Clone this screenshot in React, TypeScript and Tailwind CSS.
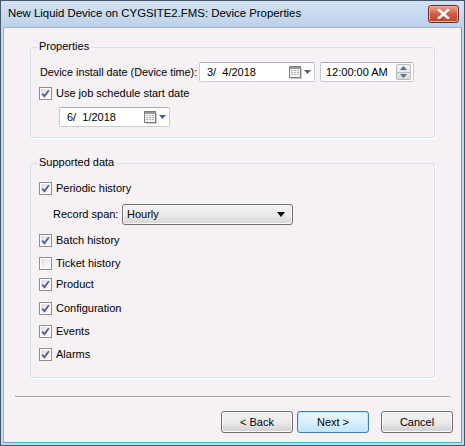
import React from "react";

const font = { fontFamily: '"Liberation Sans", Arial, sans-serif' };

function Check({ checked }: { checked: boolean }) {
  return (
    <span className="relative inline-block w-[13px] h-[13px] border border-[#8f8f8f] bg-white shrink-0">
      <span className="absolute inset-[1px] bg-gradient-to-br from-[#dcdcdc] via-[#f0f0f0] to-[#fafafa]" />
      {checked && (
        <svg className="absolute left-[1px] top-[1px]" width="9" height="9" viewBox="0 0 9 9">
          <path d="M1.2 4.6 L3.4 7.2 L7.8 1.2" fill="none" stroke="#4a5f97" strokeWidth="1.8" />
        </svg>
      )}
    </span>
  );
}

function CheckRow({ checked, label, className = "" }: { checked: boolean; label: string; className?: string }) {
  return (
    <div className={"flex items-center gap-[4px] h-[13px] " + className}>
      <Check checked={checked} />
      <span className="text-[11px] text-black leading-none">{label}</span>
    </div>
  );
}

function CalIcon() {
  return (
    <span className="flex items-center gap-[2px]">
      <svg width="13" height="13" viewBox="0 0 13 13">
        <rect x="0.5" y="0.5" width="11" height="11" fill="#f4f4f4" stroke="#7d7d7d" />
        <rect x="1" y="1" width="10" height="2" fill="#9a9a9a" />
        <g fill="#b8b8b8">
          <rect x="2" y="4" width="2" height="1" />
          <rect x="5" y="4" width="2" height="1" />
          <rect x="8" y="4" width="2" height="1" />
          <rect x="2" y="6" width="2" height="1" />
          <rect x="5" y="6" width="2" height="1" />
          <rect x="8" y="6" width="2" height="1" />
          <rect x="2" y="8" width="2" height="1" />
          <rect x="5" y="8" width="2" height="1" />
          <rect x="8" y="8" width="2" height="1" />
        </g>
        <rect x="12" y="2" width="1" height="11" fill="#c8c8c8" />
        <rect x="2" y="12" width="11" height="1" fill="#c8c8c8" />
      </svg>
      <svg width="7" height="4" viewBox="0 0 7 4">
        <path d="M0 0 H7 L3.5 4 Z" fill="#4d5b73" />
      </svg>
    </span>
  );
}

function DateBox({ value, w }: { value: string; w: string }) {
  return (
    <div className={"flex items-center h-[20px] bg-white border border-[#c9ccd1] border-t-[#abadb3] rounded-[2px] pl-[7px] pr-[3px] " + w}>
      <span className="flex-1 text-[11px] text-black leading-none whitespace-pre">{value}</span>
      <CalIcon />
    </div>
  );
}

function Button({ label, def = false }: { label: string; def?: boolean }) {
  return (
    <div
      className={
        "w-[72px] h-[22px] rounded-[3px] border flex items-center justify-center text-[11px] text-black " +
        (def
          ? "border-[#3c7fb1] bg-gradient-to-b from-[#eaf6fd] via-[#d9f0fc] to-[#bee6fd] shadow-[inset_0_0_0_1px_#c2e4f6]"
          : "border-[#707070] bg-gradient-to-b from-[#f2f2f2] via-[#ebebeb] to-[#cfcfcf] shadow-[inset_0_0_0_1px_#fcfcfc]")
      }
    >
      {label}
    </div>
  );
}

function Group({ title, className, children }: { title: string; className: string; children: React.ReactNode }) {
  return (
    <div className={"relative border border-[#d5dfe5] rounded-[3px] shadow-[1px_1px_0_#ffffff] " + className}>
      <span className="absolute left-[6px] -top-[7px] px-[2px] bg-[#f5f1f5] text-[11px] text-black leading-none">{title}</span>
      {children}
    </div>
  );
}

export default function App() {
  return (
    <div style={font} className="w-[465px] h-[446px] bg-white">
      <div className="w-[465px] h-[446px] border border-[#44576f] bg-[#c4d8ee] flex flex-col">
        <div className="h-[26px] flex items-center pl-[7px] pr-[5px] bg-gradient-to-b from-[#d3e2f3] to-[#bcd2eb]">
          <span className="flex-1 text-[11.4px] text-black">
            New Liquid Device on CYGSITE2.FMS: Device Properties
          </span>
          <div className="w-[31px] h-[18px] rounded-[3px] border border-[#6d2b2b] bg-gradient-to-b from-[#e8a493] via-[#d05d45] to-[#c0402a] flex items-center justify-center shadow-[inset_0_0_0_1px_#eeb4a6]">
            <svg width="13" height="10" viewBox="0 0 13 10">
              <path d="M2 1 L11 9 M11 1 L2 9" stroke="#ffffff" strokeWidth="2.6" strokeLinecap="square" />
            </svg>
          </div>
        </div>
        <div className="flex-1 mx-[2px] mb-[2px] bg-[#f5f1f5] border border-[#9fb6d0] border-b-[#48a9dd] border-r-[#48a9dd] flex flex-col">
          <div className="px-[26px] pt-[19px]">
            <Group title="Properties" className="h-[91px] pl-[9px] pt-[14px]">
              <div className="flex items-center">
                <span className="text-[10.8px] text-black w-[159px] whitespace-nowrap">Device install date (Device time):</span>
                <DateBox value="3/  4/2018" w="w-[116px]" />
                <div className="ml-[5px] w-[94px] h-[20px] bg-white border border-[#c9ccd1] border-t-[#abadb3] rounded-[2px] flex items-center pl-[5px] pr-[2px]">
                  <span className="flex-1 text-[11px] text-black leading-none">12:00:00 AM</span>
                  <div className="flex flex-col w-[15px] h-[16px] border border-[#b5b9c0] rounded-[2px] bg-gradient-to-b from-[#f3f3f3] to-[#dcdcdc]">
                    <div className="flex-1 flex items-center justify-center border-b border-[#b5b9c0]">
                      <svg width="7" height="4" viewBox="0 0 7 4"><path d="M0 4 H7 L3.5 0 Z" fill="#5a6c8c" /></svg>
                    </div>
                    <div className="flex-1 flex items-center justify-center">
                      <svg width="7" height="4" viewBox="0 0 7 4"><path d="M0 0 H7 L3.5 4 Z" fill="#5a6c8c" /></svg>
                    </div>
                  </div>
                </div>
              </div>
              <CheckRow checked label="Use job schedule start date" className="mt-[5px] -ml-[1px]" />
              <div className="mt-[7px] ml-[19px]">
                <DateBox value="6/  1/2018" w="w-[111px]" />
              </div>
            </Group>
          </div>
          <div className="px-[26px] pt-[25px]">
            <Group title="Supported data" className="h-[215px] pl-[8px] pt-[18px]">
              <CheckRow checked label="Periodic history" />
              <div className="flex items-center mt-[9px] ml-[14px]">
                <span className="text-[11px] text-black w-[69px]">Record span:</span>
                <div className="w-[171px] h-[21px] rounded-[3px] border border-[#707070] bg-gradient-to-b from-[#f2f2f2] via-[#ebebeb] to-[#d6d6d6] shadow-[inset_0_0_0_1px_#fafafa] flex items-center pl-[4px] pr-[7px]">
                  <span className="flex-1 text-[11px] text-black leading-none">Hourly</span>
                  <svg width="8" height="5" viewBox="0 0 8 5"><path d="M0 0 H8 L4 5 Z" fill="#000" /></svg>
                </div>
              </div>
              <CheckRow checked label="Batch history" className="mt-[9px]" />
              <CheckRow checked={false} label="Ticket history" className="mt-[10px]" />
              <CheckRow checked label="Product" className="mt-[8px]" />
              <CheckRow checked label="Configuration" className="mt-[11px]" />
              <CheckRow checked label="Events" className="mt-[10px]" />
              <CheckRow checked label="Alarms" className="mt-[10px]" />
            </Group>
          </div>
          <div className="mx-[11px] mt-[18px] h-[2px] border-t border-[#a0a0a0] border-b border-b-white" />
          <div className="flex justify-end pr-[8px] mt-[13px] gap-[4px]">
            <Button label="< Back" />
            <Button label="Next >" def />
            <div className="w-[4px]" />
            <Button label="Cancel" />
          </div>
        </div>
      </div>
    </div>
  );
}
